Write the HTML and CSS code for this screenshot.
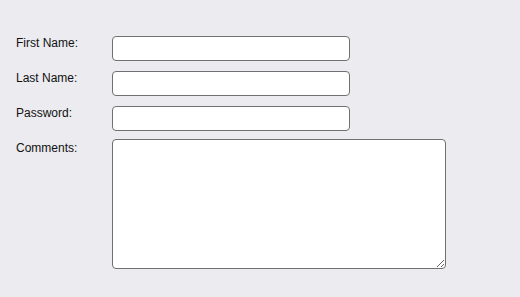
FILE: index.html
```html
<!DOCTYPE html>
<html>
<head>
<meta charset="utf-8">
<link rel="stylesheet" href="styles.css">
</head>
<body>
<form class="form">
  <div class="row">
    <label class="label" for="first">First Name:</label>
    <input class="field" id="first" type="text">
  </div>
  <div class="row">
    <label class="label" for="last">Last Name:</label>
    <input class="field" id="last" type="text">
  </div>
  <div class="row">
    <label class="label" for="pw">Password:</label>
    <input class="field" id="pw" type="password">
  </div>
  <div class="row">
    <label class="label" for="comments">Comments:</label>
    <textarea class="area" id="comments"></textarea>
  </div>
</form>
</body>
</html>
```

FILE: styles.css
```css
html, body {
  margin: 0;
  padding: 0;
  background: #ecebf0;
  width: 520px;
  height: 297px;
  overflow: hidden;
}

.form {
  display: flex;
  flex-direction: column;
  gap: 10px;
  padding: 36px 0 0 16px;
  margin: 0;
}

.row {
  display: flex;
  align-items: flex-start;
}

.label {
  width: 96px;
  flex: none;
  font-family: "Liberation Sans", Arial, sans-serif;
  font-size: 12px;
  line-height: 14px;
  color: #111;
  padding-top: 0;
}

.field {
  box-sizing: border-box;
  width: 238px;
  height: 25px;
  margin: 0;
  padding: 0 4px;
  border: 1px solid #707070;
  border-radius: 4px;
  background: #fff;
  outline: none;
  font-family: "Liberation Sans", Arial, sans-serif;
  font-size: 12px;
}

.area {
  box-sizing: border-box;
  width: 334px;
  height: 130px;
  margin: -2px 0 0 0;
  padding: 2px 4px;
  border: 1px solid #707070;
  border-radius: 4px;
  background: #fff;
  outline: none;
  font-family: "Liberation Sans", Arial, sans-serif;
  font-size: 12px;
}
```
